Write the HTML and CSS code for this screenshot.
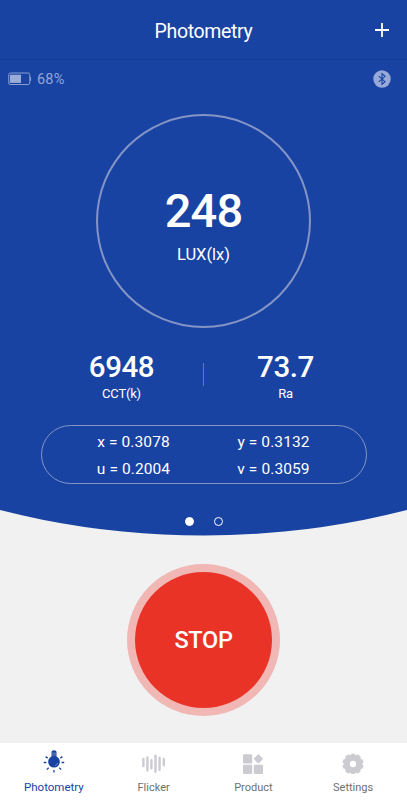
FILE: index.html
```html
<!DOCTYPE html>
<html lang="en">
<head>
    <meta charset="UTF-8">
    <meta name="viewport" content="width=device-width, initial-scale=1.0">
    <title>Photometry</title>
    <link rel="stylesheet" href="styles.css">
</head>
<body>
    <main class="panel">
        <header class="header">
            <h1 class="title">Photometry</h1>
            <svg class="add-icon" viewBox="0 0 16 16"><path d="M8 1v14M1 8h14"/></svg>
        </header>

        <div class="status">
            <div class="battery">
                <svg class="battery-icon" viewBox="0 0 24 14">
                    <rect class="battery-shell" x="0.75" y="1" width="21" height="11.5" rx="1.5"/>
                    <rect class="battery-level" x="2" y="2.7" width="11" height="8.2"/>
                    <path class="battery-shell" d="M22.6 4.8v4"/>
                </svg>
                <span class="battery-text">68%</span>
            </div>
            <svg class="bluetooth-icon" viewBox="0 0 18 18">
                <circle cx="9" cy="9" r="8.7"/>
                <path d="M5.8 6.1l6.2 5.6-3 2.6V3.7l3 2.6-6.2 5.6"/>
            </svg>
        </div>

        <section class="dial">
            <div class="dial-value">248</div>
            <div class="dial-unit">LUX(lx)</div>
        </section>

        <section class="readings">
            <div class="reading">
                <div class="reading-value">6948</div>
                <div class="reading-unit">CCT(k)</div>
            </div>
            <div class="divider"></div>
            <div class="reading">
                <div class="reading-value">73.7</div>
                <div class="reading-unit">Ra</div>
            </div>
        </section>

        <section class="coords">
            <span>x = 0.3078</span>
            <span>y = 0.3132</span>
            <span>u = 0.2004</span>
            <span>v = 0.3059</span>
        </section>

        <div class="dots">
            <span class="dot active"></span>
            <span class="dot"></span>
        </div>
    </main>

    <div class="action">
        <button class="stop-button">STOP</button>
    </div>

    <nav class="tabs">
        <a class="tab active">
            <svg class="tab-icon" viewBox="0 0 24 24">
                <path d="M9.5 1.8q0-1.5 2.5-1.5t2.5 1.5v4.8q3.3 1.7 3.3 5.2a5.8 5.8 0 0 1-11.6 0q0-3.5 3.3-5.2z"/>
                <path class="rays" d="M1.8 12.5h2.6M19.6 12.5h2.6M3.6 6.6l2.1 1.5M20.4 6.6l-2.1 1.5M4.8 19.6l1.9-1.9M19.2 19.6l-1.9-1.9M12 20v2.6"/>
                <path class="shine" d="M10 3.2h4M10 5h4M12.9 15.6q2.3-.5 2.9-2.8"/>
            </svg>
            <span>Photometry</span>
        </a>
        <a class="tab">
            <svg class="tab-icon" viewBox="0 0 24 24">
                <path class="bars" d="M1.4 9v7M5.4 7.4v13M9.4 10.3v8M13.5 5.8v16M17.6 7.8v12M21.8 9v6.3"/>
            </svg>
            <span>Flicker</span>
        </a>
        <a class="tab">
            <svg class="tab-icon" viewBox="0 0 24 24">
                <rect x="2" y="4.2" width="9.2" height="9.2" rx="1.2"/>
                <rect x="2" y="14.8" width="9.2" height="9.2" rx="1.2"/>
                <rect x="12.8" y="14.8" width="9.2" height="9.2" rx="1.2"/>
                <rect x="14" y="5.4" width="6.8" height="6.8" rx="1" transform="rotate(45 17.4 8.8)"/>
            </svg>
            <span>Product</span>
        </a>
        <a class="tab">
            <svg class="tab-icon" viewBox="0 0 24 24">
                <path fill-rule="evenodd" d="M7.4 4.3Q9.3 6.4 10.6 3.8h2.8Q14.7 6.4 16.6 4.3L19.7 6.4Q18.6 9.4 21.6 9.4L22.6 12.6Q19.6 14 22.6 15.4L21.6 18.6Q18.6 18.6 19.7 21.6L16.6 23.7Q14.7 21.6 13.4 24.2h-2.8Q9.3 21.6 7.4 23.7L4.3 21.6Q5.4 18.6 2.4 18.6L1.4 15.4Q4.4 14 1.4 12.6L2.4 9.4Q5.4 9.4 4.3 6.4zM12 10.8a3.2 3.2 0 1 0 0 6.4a3.2 3.2 0 1 0 0-6.4z"/>
            </svg>
            <span>Settings</span>
        </a>
    </nav>
</body>
</html>
```
FILE: styles.css
```css
* {
    margin: 0;
    padding: 0;
    box-sizing: border-box;
}

body {
    font-family: Roboto, 'Liberation Sans', sans-serif;
    background: #f1f1f1;
    color: white;
    height: 100vh;
    overflow: hidden;
    display: flex;
    flex-direction: column;
}

svg {
    display: block;
}

/* Blue area, rounded off at the bottom by a large circle */
.panel {
    height: 536px;
    flex-shrink: 0;
    background: #1943a3;
    clip-path: circle(825px at 50% -289.5px);
}

.header {
    height: 60px;
    padding: 0 17px;
    display: grid;
    grid-template-columns: 16px 1fr 16px;
    align-items: center;
    border-bottom: 1px solid #183d98;
}

.title {
    grid-column: 2;
    text-align: center;
    font-size: 19.5px;
    font-weight: 400;
    letter-spacing: -0.35px;
    padding-top: 3px;
}

.add-icon {
    width: 16px;
    height: 16px;
    margin-top: 1px;
    fill: none;
    stroke: white;
    stroke-width: 1.8;
}

.status {
    height: 38px;
    padding: 0 16px 0 8px;
    display: flex;
    align-items: center;
    justify-content: space-between;
}

.battery {
    display: flex;
    align-items: center;
    gap: 5px;
}

.battery-icon {
    width: 24px;
    height: 14px;
}

.battery-shell {
    fill: none;
    stroke: #8a9fd0;
}

.battery-level {
    fill: #9aacd8;
}

.battery-text {
    padding-top: 1px;
    font-size: 14.5px;
    letter-spacing: 0.2px;
    color: #93a6d4;
}

.bluetooth-icon {
    width: 18px;
    height: 18px;
}

.bluetooth-icon circle {
    fill: #96a9d8;
}

.bluetooth-icon path {
    fill: none;
    stroke: #1943a3;
    stroke-width: 1.1;
}

.dial {
    width: 215px;
    height: 214px;
    margin: 16px auto 0;
    padding-top: 67px;
    border: 2px solid #8495c5;
    border-radius: 50%;
    text-align: center;
}

.dial-value {
    font-size: 47px;
    font-weight: 500;
    line-height: 56px;
    letter-spacing: -0.8px;
}

.dial-unit {
    margin-top: 6px;
    font-size: 16.5px;
    line-height: 20px;
}

.readings {
    height: 75px;
    margin-top: 22px;
    padding: 0 40px;
    display: flex;
}

.reading {
    flex: 1;
    text-align: center;
}

.reading-value {
    font-size: 29.5px;
    font-weight: 500;
    line-height: 34px;
    letter-spacing: -0.4px;
}

.reading-unit {
    margin-top: 2px;
    font-size: 13px;
    line-height: 16px;
    letter-spacing: -0.2px;
}

.divider {
    width: 1px;
    height: 23px;
    margin-top: 13px;
    background: #5c77bc;
}

.coords {
    width: 326px;
    height: 59px;
    margin: 0 auto;
    padding: 3px 22px 1px;
    border: 1px solid #8495c5;
    border-radius: 30px;
    display: grid;
    grid-template-columns: 1fr 1fr;
    align-items: center;
    text-align: center;
    font-size: 15.5px;
    letter-spacing: 0.1px;
}

.dots {
    margin-top: 33px;
    display: flex;
    justify-content: center;
    gap: 20px;
}

.dot {
    width: 9px;
    height: 9px;
    border: 1.5px solid white;
    border-radius: 50%;
}

.dot.active {
    background: white;
}

.action {
    flex: 1;
    padding-top: 28px;
}

.stop-button {
    display: block;
    width: 153px;
    height: 152px;
    margin: 0 auto;
    border: 8px solid #f0b7b5;
    border-radius: 50%;
    background: #ea3327;
    color: white;
    font-family: inherit;
    font-size: 23.5px;
    font-weight: 500;
    letter-spacing: -0.3px;
}

.tabs {
    height: 57px;
    flex-shrink: 0;
    padding: 0 4px;
    background: white;
    display: flex;
}

.tab {
    flex: 1;
    padding-top: 7px;
    display: flex;
    flex-direction: column;
    align-items: center;
    font-size: 11px;
    line-height: 14px;
    color: #707070;
}

.tab span {
    margin-top: 7px;
}

.tab-icon {
    width: 24px;
    height: 24px;
    fill: #cbcbd1;
}

.tab.active {
    color: #1943a3;
}

.tab.active span {
    margin-top: 6px;
    font-size: 11.5px;
}

.tab.active .tab-icon {
    fill: #1943a3;
}

.rays {
    stroke: #1943a3;
    stroke-width: 1.3;
}

.shine {
    fill: none;
    stroke: #8da2d3;
    stroke-width: 0.7;
}

.bars {
    stroke: #cbcbd1;
    stroke-width: 2.4;
    stroke-linecap: round;
}
```
